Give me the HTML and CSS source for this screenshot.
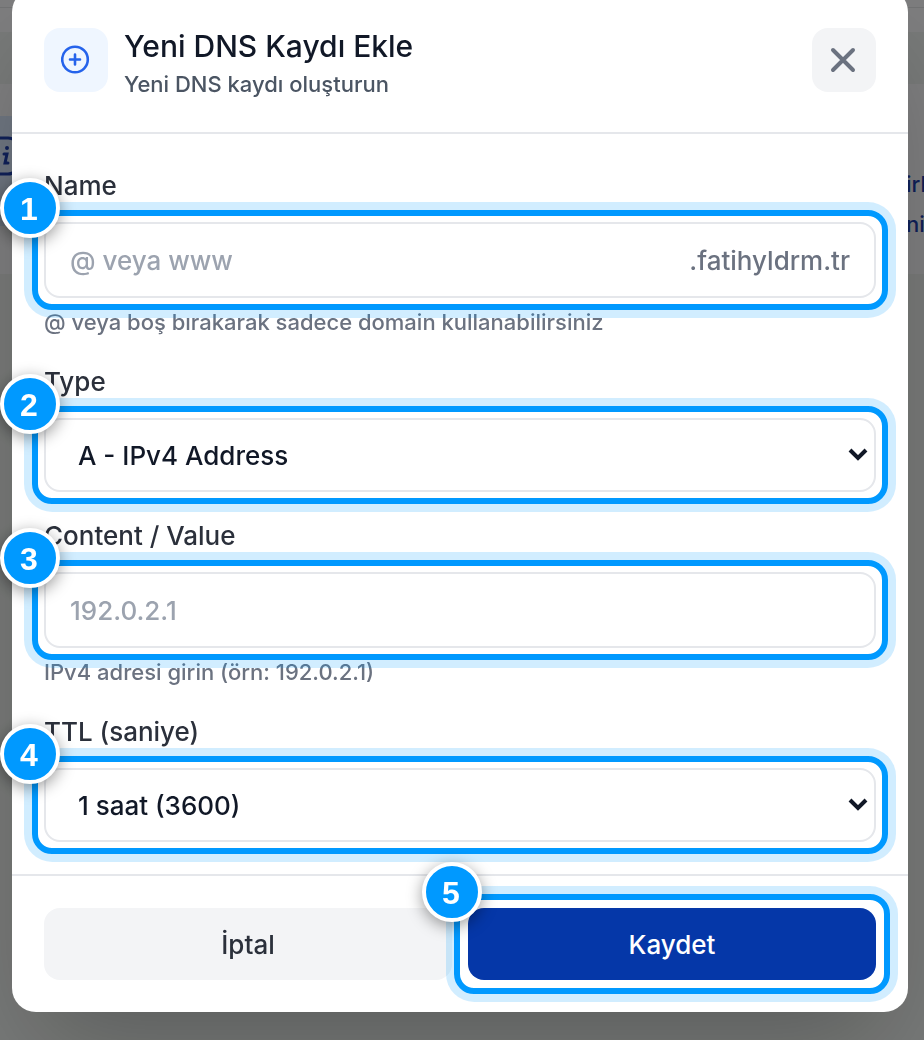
FILE: index.html
```
<!DOCTYPE html>
<html lang="tr">
<head>
  <meta charset="UTF-8">
  <title>Yeni DNS Kaydı Ekle</title>
  <meta name="viewport" content="width=device-width, initial-scale=1">
  <link rel="stylesheet" href="styles.css">
</head>
<body>

  <!-- Arka plandaki sayfa -->
  <div class="page">
    <div class="page-top"></div>
    <div class="page-card">
      <div class="notice">
        <svg class="notice-icon" width="40" height="40" viewBox="0 0 40 40" fill="none" stroke="#1e40af" stroke-width="3" stroke-linecap="round">
          <rect x="2" y="2" width="36" height="36" rx="10"/>
          <circle cx="27" cy="12" r="1" fill="#1e40af" stroke-width="2"/>
          <path d="M24 18h3l-2 9h3"/>
        </svg>
      </div>
      <div class="page-text">irk<br>niz</div>
    </div>
  </div>

  <!-- Modal -->
  <div class="overlay">
    <form class="modal">

      <div class="modal-header">
        <div class="header-icon">
          <svg width="30" height="30" viewBox="0 0 30 30" fill="none" stroke="#2563eb" stroke-width="2.6" stroke-linecap="round">
            <circle cx="14" cy="14.5" r="12.8"/>
            <path d="M14 9.5v10M9 14.5h10"/>
          </svg>
        </div>
        <div class="header-text">
          <h1>Yeni DNS Kaydı Ekle</h1>
          <p>Yeni DNS kaydı oluşturun</p>
        </div>
        <button class="close" type="button" aria-label="Kapat">
          <svg width="30" height="30" viewBox="0 0 30 30" fill="none" stroke="#6b7280" stroke-width="4" stroke-linecap="round">
            <path d="M4 5l20 20M24 5L4 25"/>
          </svg>
        </button>
      </div>

      <div class="modal-body">
        <div class="field">
          <label for="name">Name</label>
          <div class="control">
            <div class="input-box">
              <input id="name" type="text" placeholder="@ veya www">
              <span class="suffix">.fatihyldrm.tr</span>
            </div>
            <div class="ring"><span class="badge">1</span></div>
          </div>
          <p class="hint">@ veya boş bırakarak sadece domain kullanabilirsiniz</p>
        </div>

        <div class="field">
          <label for="type">Type</label>
          <div class="control">
            <select id="type">
              <option>A - IPv4 Address</option>
            </select>
            <svg class="arrow" width="20" height="14" viewBox="0 0 20 14" fill="none" stroke="#111827" stroke-width="4">
              <path d="M2 2l8 8 8-8"/>
            </svg>
            <div class="ring"><span class="badge">2</span></div>
          </div>
        </div>

        <div class="field">
          <label for="content">Content / Value</label>
          <div class="control">
            <div class="input-box">
              <input id="content" type="text" placeholder="192.0.2.1">
            </div>
            <div class="ring"><span class="badge">3</span></div>
          </div>
          <p class="hint">IPv4 adresi girin (örn: 192.0.2.1)</p>
        </div>

        <div class="field">
          <label for="ttl">TTL (saniye)</label>
          <div class="control">
            <select id="ttl">
              <option>1 saat (3600)</option>
            </select>
            <svg class="arrow" width="20" height="14" viewBox="0 0 20 14" fill="none" stroke="#111827" stroke-width="4">
              <path d="M2 2l8 8 8-8"/>
            </svg>
            <div class="ring"><span class="badge">4</span></div>
          </div>
        </div>
      </div>

      <div class="modal-footer">
        <button class="btn" type="button">İptal</button>
        <div class="control">
          <button class="btn primary" type="submit">Kaydet</button>
          <div class="ring wide"><span class="badge">5</span></div>
        </div>
      </div>

    </form>
  </div>

</body>
</html>
```
FILE: styles.css
```
* {
  box-sizing: border-box;
}

body {
  margin: 0;
  background: #eff3f0;
  font-family: Inter, "Liberation Sans", sans-serif;
  font-weight: 500;
  color: #111827;
  overflow: hidden;
}

h1, p {
  margin: 0;
}

/* Arka plandaki sayfa */
.page-top {
  height: 32px;
  margin-bottom: 52px;
  background: linear-gradient(#e3e4e6, #e3e4e6) 0 7px / 100% 1px no-repeat #fafbfd;
}

.page-card {
  display: flex;
  justify-content: space-between;
  height: 190px;
  padding-top: 32px;
  background: #fafbfd;
}

.notice {
  width: 60px;
  height: 110px;
  padding-top: 20px;
  background: #dbeafe;
}

.notice-icon {
  display: block;
  margin-left: -20px;
}

.page-text {
  width: 18px;
  padding-top: 48px;
  font-size: 22px;
  line-height: 40px;
  color: #1e40af;
}

/* Modal */
.overlay {
  position: fixed;
  inset: 0;
  padding: 0 16px 0 12px;
  background: rgba(0, 0, 0, 0.5);
}

.modal {
  margin-top: -12px;
  background: #fff;
  border-radius: 24px;
  box-shadow: 0 50px 100px -24px rgba(0, 0, 0, 0.25);
}

.modal-header {
  display: flex;
  align-items: center;
  gap: 16px;
  padding: 40px 32px;
  border-bottom: 2px solid #e5e7eb;
}

.header-icon,
.close {
  display: flex;
  align-items: center;
  justify-content: center;
  width: 64px;
  height: 64px;
  border-radius: 16px;
}

.header-icon {
  background: #eff6ff;
}

.close {
  padding: 0;
  border: none;
  background: #f3f4f6;
  cursor: pointer;
}

.header-text {
  flex: 1;
  height: 64px;
}

.header-text h1 {
  font-size: 30px;
  font-weight: 500;
  line-height: 36px;
}

.header-text p {
  font-size: 22px;
  line-height: 40px;
  color: #4b5563;
}

.modal-body {
  display: flex;
  flex-direction: column;
  gap: 24px;
  padding: 32px;
}

/* Form alanları */
.field label {
  display: block;
  margin-bottom: 16px;
  font-size: 26px;
  line-height: 40px;
  color: #2b303b;
}

.control {
  position: relative;
}

.input-box {
  display: flex;
  align-items: center;
  height: 76px;
  padding: 0 24px;
  border: 2px solid #e5e7eb;
  border-radius: 16px;
}

input {
  flex: 1;
  min-width: 0;
  padding: 0;
  border: none;
  outline: none;
  background: none;
  font: inherit;
  font-size: 26px;
  color: #111827;
}

input::placeholder {
  color: #9ca3af;
}

.suffix {
  font-size: 26px;
  color: #6b7280;
}

select {
  display: block;
  width: 100%;
  height: 74px;
  padding: 0 32px;
  border: 2px solid #e5e7eb;
  border-radius: 16px;
  appearance: none;
  background: #fff;
  font: inherit;
  font-size: 26px;
  color: #111827;
}

.arrow {
  position: absolute;
  top: 30px;
  right: 8px;
  pointer-events: none;
}

.hint {
  margin-top: 8px;
  font-size: 22px;
  line-height: 32px;
  color: #6b7280;
}

/* Numaralı vurgu çerçevesi */
.ring {
  position: absolute;
  inset: -12px;
  border: 6px solid #0099ff;
  border-radius: 20px;
  box-shadow: 0 0 0 8px rgba(0, 153, 255, 0.18);
  pointer-events: none;
}

.ring.wide {
  inset: -14px;
}

.badge {
  position: absolute;
  top: -38px;
  left: -38px;
  width: 60px;
  height: 60px;
  padding-right: 2px;
  border: 4px solid #fff;
  border-radius: 50%;
  background: #0099ff;
  box-shadow: 0 4px 16px rgba(0, 0, 0, 0.4);
  font-family: "Liberation Sans", sans-serif;
  font-size: 32px;
  font-weight: 700;
  line-height: 54px;
  text-align: center;
  color: #fff;
}

/* Alt butonlar */
.modal-footer {
  display: grid;
  grid-template-columns: 1fr 1fr;
  gap: 16px;
  padding: 32px;
  border-top: 2px solid #e5e7eb;
}

.btn {
  width: 100%;
  height: 72px;
  border: none;
  border-radius: 16px;
  background: #f3f4f6;
  font: inherit;
  font-size: 26px;
  color: #2b303b;
  cursor: pointer;
}

.btn.primary {
  display: block;
  background: #0537a8;
  color: #fff;
}
```
